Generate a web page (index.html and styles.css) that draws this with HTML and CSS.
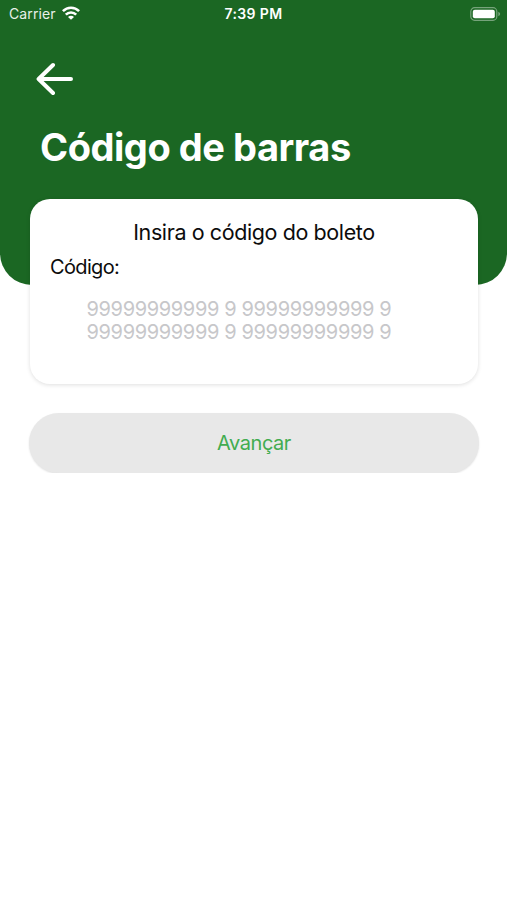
FILE: index.html
```
<!DOCTYPE html>
<html lang="pt-BR">
<head>
    <title>Código de barras</title>
    <meta charset="UTF-8">
    <meta name="viewport" content="width=device-width, initial-scale=1.0">
    <link rel="stylesheet" href="styles.css">
</head>
<body>
    <header class="header">
        <div class="status-bar">
            <div class="carrier">
                <span class="carrier-name">Carrier</span>
                <svg class="wifi" width="18" height="14" viewBox="0 0 18 14" fill="none" stroke="#fff" stroke-width="2.6">
                    <path d="M0.9 5.2C5.4 0.6 12.6 0.6 17.1 5.2"/>
                    <path d="M3.8 8.6C6.7 5.7 11.3 5.7 14.2 8.6"/>
                    <path d="M9 13.8L6 10.9C7.7 9.3 10.3 9.3 12 10.9Z" fill="#fff" stroke="none"/>
                </svg>
            </div>
            <span class="time">7:39 PM</span>
            <svg class="battery" width="31" height="14" viewBox="0 0 31 14">
                <rect x="0.8" y="0.7" width="26" height="12.6" rx="3.8" fill="none" stroke="#fff" stroke-opacity="0.4" stroke-width="1.2"/>
                <rect x="2.8" y="2.7" width="22" height="8.6" rx="2" fill="#fff"/>
                <path d="M28.3 4.8C30.7 5.6 30.7 8.4 28.3 9.2Z" fill="#fff" fill-opacity="0.4"/>
            </svg>
        </div>
        <a class="back" href="#" aria-label="Voltar">
            <svg width="38" height="34" viewBox="0 0 38 34" fill="none" stroke="#fff" stroke-width="4" stroke-linecap="round" stroke-linejoin="round">
                <path d="M17 3L2.6 17L17 31M3.5 17H35"/>
            </svg>
        </a>
        <h1>Código de barras</h1>
    </header>

    <main class="content">
        <section class="card">
            <h2>Insira o código do boleto</h2>
            <label class="code-label" for="code">Código:</label>
            <textarea id="code" class="code-input" rows="2" placeholder="99999999999 9 99999999999 9 99999999999 9 99999999999 9"></textarea>
        </section>
        <button class="next-btn">Avançar</button>
    </main>
</body>
</html>
```

FILE: styles.css
```
* {
    box-sizing: border-box;
    margin: 0;
    padding: 0;
}

body {
    font-family: Inter, "Liberation Sans", sans-serif;
    color: #0c0c0c;
    background-color: #fff;
}

.header {
    height: 285px;
    background-color: #1b6723;
    border-radius: 0 0 32px 32px;
    color: white;
}

.status-bar {
    display: grid;
    grid-template-columns: 1fr auto 1fr;
    align-items: center;
    height: 27px;
    padding: 0 6px 0 9px;
    font-size: 14px;
}

.carrier {
    display: flex;
    align-items: center;
    gap: 6px;
}

.carrier-name {
    letter-spacing: 0.1px;
    opacity: 0.9;
}

.wifi {
    margin-top: -1px;
}

.time {
    font-weight: 600;
    letter-spacing: 0.4px;
    margin-right: 3px;
}

.battery {
    justify-self: end;
}

.back {
    display: block;
    width: 38px;
    height: 34px;
    margin: 35px 0 0 36px;
}

.back svg {
    display: block;
}

h1 {
    margin: 28px 0 0 40px;
    font-size: 38px;
    line-height: 46px;
    font-weight: 700;
    letter-spacing: -0.45px;
}

.content {
    padding: 0 28px 0 29px;
    margin-top: -86px;
}

.card {
    height: 185px;
    margin: 0 1px;
    padding: 19px 20px 0;
    background: white;
    border-radius: 20px;
    box-shadow: 0 1px 4px rgba(0,0,0,0.13);
}

h2 {
    font-size: 21.5px;
    line-height: 28px;
    font-weight: 400;
    letter-spacing: -0.4px;
    text-align: center;
}

.code-label {
    display: block;
    margin-top: 8px;
    font-size: 20px;
    line-height: 26px;
    letter-spacing: -0.65px;
}

.code-input {
    display: block;
    width: 330px;
    height: 46px;
    margin: 18px 0 0 36.5px;
    border: none;
    outline: none;
    resize: none;
    overflow: hidden;
    background: transparent;
    font-family: inherit;
    font-size: 20px;
    line-height: 23px;
    letter-spacing: -0.36px;
}

.code-input::placeholder {
    color: #c7c7ca;
}

.next-btn {
    display: block;
    width: 100%;
    height: 60px;
    margin-top: 29px;
    border: none;
    border-radius: 30px;
    background-color: #e8e8e8;
    box-shadow: 0 1px 2px rgba(0,0,0,0.12);
    color: #42ac50;
    font-family: inherit;
    font-size: 20px;
    letter-spacing: -0.45px;
    cursor: pointer;
}
```
